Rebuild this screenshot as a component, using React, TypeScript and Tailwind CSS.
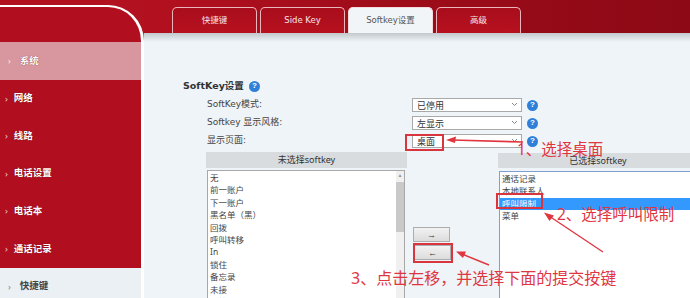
import React from 'react';

const sans = "font-['DejaVu_Sans','Noto_Sans_CJK_SC',sans-serif]";
const cjk = "font-['Noto_Sans','Noto_Sans_CJK_SC',sans-serif]";

function Help() {
  return (
    <span className="ml-[5px] inline-flex h-[11px] w-[11px] items-center justify-center rounded-full bg-[#2f7fd8] text-[8px] font-bold leading-none text-white font-['Liberation_Sans',sans-serif]">
      ?
    </span>
  );
}

function Select({ value }: { value: string }) {
  return (
    <div className="flex h-[14px] w-[110px] items-end justify-between border border-[#a9a9a9] bg-white pb-[1px] pl-[4px] pr-[3px]">
      <span className={`${cjk} text-[9px] leading-none text-[#333]`}>{value}</span>
      <svg className="mb-[3px]" width="7" height="5" viewBox="0 0 7 5">
        <path d="M1 1 L3.5 3.5 L6 1" stroke="#888" strokeWidth="1" fill="none" />
      </svg>
    </div>
  );
}

export default function App() {
  const side = ['网络', '线路', '电话设置', '电话本', '通话记录'];
  const leftItems = ['无', '前一账户', '下一账户', '黑名单（黑）', '回拨', '呼叫转移', 'In', '锁住', '备忘录', '未接', '拒接'];
  const rightItems = ['通话记录', '本地联系人', '呼叫限制', '菜单'];
  const tabs = ['快捷键', 'Side Key', 'Softkey设置', '高级'];

  return (
    <div className="relative flex h-[298px] w-[690px] overflow-hidden bg-[#b2111f]">
      {/* Sidebar */}
      <div className="mt-[5px] flex w-[144px] shrink-0 flex-col overflow-hidden rounded-tr-[36px] border-r-[3px] border-t-2 border-white bg-[#b10f1f] pt-[35px]">
        <div className="flex h-[37.6px] shrink-0 items-center bg-[#d8969e] pl-[8px]">
          <span className="text-[9px] text-[#fbe9eb]">›</span>
          <span className={`${cjk} ml-[9px] text-[9.5px] font-bold text-white [text-shadow:0_0_1px_#7a2a33]`}>系统</span>
        </div>
        {side.map((s) => (
          <div key={s} className="flex h-[37.6px] shrink-0 items-center pl-[5px]">
            <span className="text-[9px] text-[#f3c9ce]">›</span>
            <span className={`${cjk} ml-[6px] text-[9.5px] font-bold text-white [text-shadow:0_0_1px_#5a0a12]`}>{s}</span>
          </div>
        ))}
        <div className="flex h-[37.6px] shrink-0 items-center bg-[#eaf0f4] pl-[8px]">
          <span className="text-[9px] text-[#888]">›</span>
          <span className={`${cjk} ml-[9px] text-[9.5px] font-bold text-[#444]`}>快捷键</span>
        </div>
      </div>

      {/* Right column */}
      <div className="flex min-w-0 flex-1 flex-col">
        <div className="flex h-[33px] shrink-0 items-end gap-[3px] bg-[linear-gradient(to_right,#b3101f,#a00c1a_40%,#8c0915)] pl-[28px]">
          {tabs.map((t, i) => (
            <div
              key={t}
              className={`flex h-[26px] w-[85px] items-center justify-center rounded-t-[5px] border border-b-0 ${
                i === 2
                  ? 'border-[#f4dadd] bg-[#f1f5f7] text-[#555]'
                  : 'border-[#eab6bc] bg-[linear-gradient(to_bottom,#a80d1c,#b8111f)] text-[#f8e6e8]'
              } ${sans} text-[8.5px]`}
            >
              {t}
            </div>
          ))}
        </div>

        <div className="flex min-h-0 flex-1 flex-col overflow-hidden bg-[#eef4f7]">
          <div className="h-[9px] shrink-0 bg-[linear-gradient(to_bottom,#c3c8cc,#eef4f7)]" />
          <div className="pl-[39px] pt-[37px]">
            <div className="flex h-[14px] items-center">
              <span className={`${sans} text-[9.5px] font-bold text-[#333]`}>SoftKey设置</span>
              <Help />
            </div>
            <div className="mt-[3px] pl-[24px]">
              {[
                ['SoftKey模式:', '已停用'],
                ['Softkey 显示风格:', '左显示'],
                ['显示页面:', '桌面'],
              ].map(([l, v]) => (
                <div key={l} className="flex h-[18px] items-center">
                  <span className={`${sans} w-[205px] text-[9px] text-[#444]`}>{l}</span>
                  <Select value={v} />
                  <Help />
                </div>
              ))}
            </div>

            <div className="mt-[2px] flex pl-[23px]">
              {/* left list */}
              <div className="flex w-[201px] shrink-0 flex-col">
                <div className={`${cjk} flex h-[16px] items-center justify-center bg-[#d9dcde] text-[9px] text-[#333]`}>未选择softkey</div>
                <div className="ml-[1px] mt-[2px] flex h-[140px] w-[198px] border border-[#a8a8a8] bg-white">
                  <div className={`${cjk} flex-1 pl-[2px] pt-[1px] text-[8.5px] leading-[12.4px] text-[#444]`}>
                    {leftItems.map((s) => (
                      <div key={s}>{s}</div>
                    ))}
                  </div>
                  <div className="flex w-[8px] flex-col bg-[#f0f0f0]">
                    <div className="flex h-[10px] items-center justify-center text-[5px] text-[#999]">▲</div>
                    <div className="mt-[1px] h-[50px] bg-[#c9c9c9]" />
                  </div>
                </div>
              </div>

              {/* middle buttons */}
              <div className="flex w-[91px] shrink-0 flex-col pl-[6px] pt-[75px]">
                <div className="flex h-[15px] w-[37px] items-center justify-center border border-[#adadad] bg-[linear-gradient(to_bottom,#f2f2f2,#dcdcdc)] text-[9px] text-[#333]">→</div>
                <div className="ml-[1px] mt-[3px] flex h-[15px] w-[37px] items-center justify-center border border-[#adadad] bg-[linear-gradient(to_bottom,#f2f2f2,#dcdcdc)] text-[9px] text-[#333]">←</div>
              </div>

              {/* right list */}
              <div className="flex w-[200px] shrink-0 flex-col pt-[1px]">
                <div className={`${cjk} flex h-[15px] items-center justify-center bg-[#d9dcde] text-[9px] text-[#333]`}>已选择softkey</div>
                <div className="ml-[1px] mt-[3px] h-[140px] border border-[#7f9fd4] bg-white">
                  <div className={`${cjk} pt-[1px] text-[8.5px] leading-[12.3px] text-[#444]`}>
                    {rightItems.map((s, i) => (
                      <div key={s} className={i === 2 ? 'mr-[3px] bg-[#3399ff] pl-[2px] text-white' : 'pl-[2px]'}>
                        {s}
                      </div>
                    ))}
                  </div>
                </div>
              </div>
            </div>
          </div>
        </div>
      </div>

      {/* Annotation boxes */}
      <div className="pointer-events-none absolute left-[405px] top-[134px] h-[17px] w-[39px] border-2 border-[#d9353f]" />
      <div className="pointer-events-none absolute left-[496px] top-[193px] h-[16px] w-[47px] border-2 border-[#d9353f]" />
      <div className="pointer-events-none absolute left-[413px] top-[243px] h-[20px] w-[40px] border-2 border-[#d9353f]" />

      <svg className="pointer-events-none absolute left-0 top-0" width="690" height="298" viewBox="0 0 690 298">
        <line x1="523" y1="142" x2="452" y2="140" stroke="#e0363f" strokeWidth="1.6" />
        <polygon points="446,140 456,136.5 455,143" fill="#e0363f" />
        <line x1="603" y1="252" x2="549" y2="216" stroke="#e0363f" strokeWidth="1.4" />
        <polygon points="544,212.5 554,215.5 549.5,221" fill="#e0363f" />
        <line x1="489" y1="265" x2="462" y2="254" stroke="#e0363f" strokeWidth="1.4" />
        <polygon points="456,251.5 466,251.5 463,258" fill="#e0363f" />
      </svg>

      <div className={`pointer-events-none absolute left-[517px] top-[140px] whitespace-nowrap text-[15.5px] leading-[18px] text-[#e0363f] ${cjk}`}>1、选择桌面</div>
      <div className={`pointer-events-none absolute left-[557px] top-[205px] whitespace-nowrap text-[15.5px] leading-[18px] text-[#e0363f] ${cjk}`}>2、选择呼叫限制</div>
      <div className={`pointer-events-none absolute left-[351px] top-[269px] whitespace-nowrap text-[16px] leading-[18px] text-[#e0363f] ${cjk}`}>3、点击左移，并选择下面的提交按键</div>
    </div>
  );
}
